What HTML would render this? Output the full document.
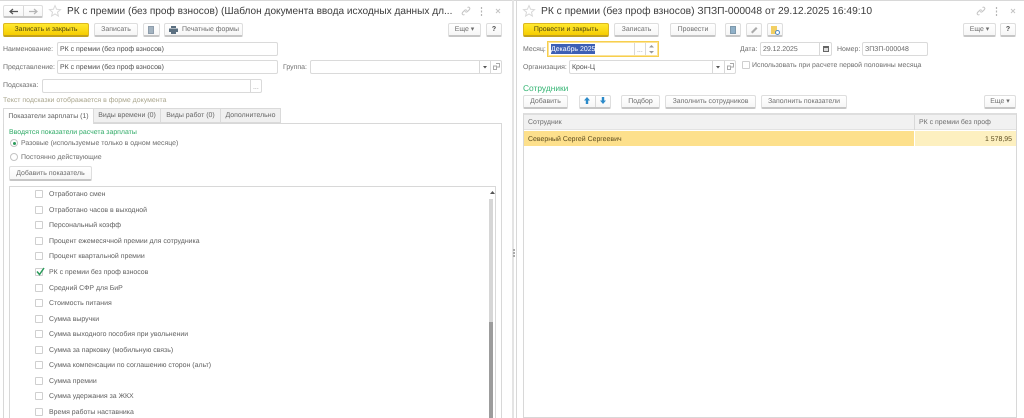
<!DOCTYPE html>
<html lang="ru"><head><meta charset="utf-8">
<style>
html,body{margin:0;padding:0;background:#fff}
#p{position:relative;width:1024px;height:418px;overflow:hidden;background:#fff;font:6.95px/12px "Liberation Sans",sans-serif;color:#666;text-rendering:geometricPrecision;filter:blur(.3px)}
#p div{position:absolute;box-sizing:border-box;white-space:nowrap}
#p svg{position:absolute;overflow:visible}
.t,.d,.l{transform:translateY(.8px)}
.t{color:#6e6e6e;height:12px}
.d{color:#4f4f4f;height:12px}
.f{background:#fff;border:1px solid #dadada;border-radius:2px}
.f.d{transform:none;line-height:13.5px!important}
.b{background:linear-gradient(#fff,#f6f6f6);border:1px solid #dedede;border-bottom:2px solid #c6c6c6;border-radius:2px;text-align:center;color:#6e6e6e;line-height:12.5px}
.y{background:linear-gradient(#ffe930,#f6cd00);border:1px solid #dcb820;border-bottom:2px solid #c4a21a;border-radius:2px;text-align:center;color:#4f4410;line-height:12.5px}
.c{width:8px;height:8px;border:1px solid #cfcfcf;border-radius:1px;background:#fff;left:35px}
.l{left:49px;color:#606060;height:12px}
.h{font-size:10.1px;line-height:14px;color:#3c3c3c;height:14px}
.ln{background:#d8d8d8}
</style></head><body><div id="p">
<div class="ln" style="left:0;top:0;width:1024px;height:1px"></div>

<!-- Left window -->
<div class="b" style="left:3px;top:5px;width:40px;height:13px"></div>
<div class="ln" style="left:23px;top:6px;width:1px;height:10px"></div>
<svg style="left:9px;top:8px" width="10" height="7"><path d="M1 3.5H9M4 1L1 3.5L4 6" stroke="#555" stroke-width="1.2" fill="none"/></svg>
<svg style="left:28px;top:8px" width="10" height="7"><path d="M1 3.5H9M6 1L9 3.5L6 6" stroke="#b5b5b5" stroke-width="1.2" fill="none"/></svg>
<svg style="left:49px;top:5px" width="12" height="12"><path d="M6 .6L7.6 4.3L11.5 4.6L8.5 7.2L9.4 11.1L6 9L2.6 11.1L3.5 7.2L.5 4.6L4.4 4.3Z" fill="#fff" stroke="#d8d8d8"/></svg>
<div class="h" style="left:67px;top:5px">РК с премии (без проф взносов) (Шаблон документа ввода исходных данных дл...</div>
<svg style="left:461px;top:6px" width="10" height="10"><path d="M1.5 6.5L3.5 4.5M6.5 1.5C8 .5 9.5 2 8.5 3.5L6.5 5.5C5.5 6.5 4.3 6 4 5.3M3.5 8.5C2 9.5.5 8 1.5 6.5L3.5 4.5C4.5 3.5 5.7 4 6 4.7" stroke="#c4c4c4" fill="none"/></svg>
<svg style="left:480px;top:7px" width="3" height="9"><path d="M1.5 0V2M1.5 3.5V5.5M1.5 7V9" stroke="#b5b5b5" stroke-width="1.2"/></svg>
<svg style="left:495px;top:8px" width="6" height="6"><path d="M1 1L5 5M5 1L1 5" stroke="#c4c4c4"/></svg>

<div class="y" style="left:3px;top:23px;width:86px;height:14px">Записать и закрыть</div>
<div class="b" style="left:94px;top:23px;width:44px;height:14px">Записать</div>
<div class="b" style="left:143px;top:23px;width:17px;height:14px"></div>
<div style="left:148px;top:26px;width:6px;height:8px;background:#a3b3c0;border:1px solid #8d9cab"></div>
<div class="b" style="left:164px;top:23px;width:79px;height:14px;padding-left:14px">Печатные формы</div>
<svg style="left:169px;top:26px" width="9" height="8"><path d="M2 0H7V2H2ZM0 2.5H9V6H7V8H2V6H0Z" fill="#5b6f80"/></svg>
<div class="b" style="left:448px;top:23px;width:33px;height:14px">Еще ▾</div>
<div class="b" style="left:486px;top:23px;width:16px;height:14px;color:#444;font-weight:bold">?</div>

<div class="t" style="left:3px;top:43px">Наименование:</div>
<div class="f d" style="left:57px;top:42px;width:221px;height:14px;padding:0 2px">РК с премии (без проф взносов)</div>
<div class="t" style="left:3px;top:61px">Представление:</div>
<div class="f d" style="left:57px;top:60px;width:221px;height:14px;padding:0 2px">РК с премии (без проф взносов)</div>
<div class="t" style="left:283px;top:61px">Группа:</div>
<div class="f" style="left:310px;top:60px;width:192px;height:14px"></div>
<div class="ln" style="left:479px;top:61px;width:1px;height:12px"></div>
<div class="ln" style="left:490px;top:61px;width:1px;height:12px"></div>
<svg style="left:483px;top:66px" width="4" height="3"><path d="M0 0H4L2 2.5Z" fill="#555"/></svg>
<svg style="left:493px;top:63px" width="7" height="7"><path d="M.5 3H3.5V6.5H.5ZM3 .5H6.5V4H3.5" stroke="#aaa" fill="none"/></svg>
<div class="t" style="left:3px;top:79px">Подсказка:</div>
<div class="f" style="left:42px;top:79px;width:220px;height:14px"></div>
<div class="ln" style="left:250px;top:80px;width:1px;height:12px"></div>
<div class="t" style="left:253px;top:81px;color:#999">...</div>
<div class="t" style="left:3px;top:94px;color:#aaa68e">Текст подсказки отображается в форме документа</div>

<!-- Tabs -->
<div style="left:93px;top:108px;width:68px;height:15px;background:#f0f0f0;border:1px solid #dadada;text-align:center;line-height:14.5px">Виды времени (0)</div>
<div style="left:161px;top:108px;width:60px;height:15px;background:#f0f0f0;border:1px solid #dadada;border-left:0;text-align:center;line-height:14.5px">Виды работ (0)</div>
<div style="left:220px;top:108px;width:61px;height:15px;background:#f0f0f0;border:1px solid #dadada;text-align:center;line-height:14.5px">Дополнительно</div>
<div class="ln" style="left:3px;top:123px;width:499px;height:1px"></div>
<div class="ln" style="left:3px;top:123px;width:1px;height:295px"></div>
<div class="ln" style="left:501px;top:123px;width:1px;height:295px"></div>
<div style="left:3px;top:108px;width:91px;height:16px;background:#fff;border:1px solid #dadada;border-bottom:0;text-align:center;line-height:15.5px;color:#606060">Показатели зарплаты (1)</div>

<div class="t" style="left:9px;top:126px;color:#2eaa66">Вводятся показатели расчета зарплаты</div>
<div style="left:10px;top:139px;width:8px;height:8px;border:1px solid #c4c4c4;border-radius:50%"></div>
<div style="left:13px;top:142px;width:3px;height:3px;background:#2a9a5a;border-radius:50%"></div>
<div class="t" style="left:21px;top:137px">Разовые (используемые только в одном месяце)</div>
<div style="left:10px;top:153px;width:8px;height:8px;border:1px solid #c4c4c4;border-radius:50%"></div>
<div class="t" style="left:21px;top:151px">Постоянно действующие</div>
<div class="b" style="left:9px;top:166px;width:83px;height:15px;line-height:13.5px">Добавить показатель</div>

<!-- List -->
<div class="ln" style="left:9px;top:186px;width:487px;height:1px"></div>
<div class="ln" style="left:9px;top:186px;width:1px;height:232px"></div>
<div class="ln" style="left:495px;top:186px;width:1px;height:232px"></div>
<svg style="left:490px;top:191px" width="5" height="3"><path d="M0 3H5L2.5 0Z" fill="#555"/></svg>
<div style="left:489px;top:199px;width:4px;height:123px;background:#d6d6d6"></div>
<div style="left:489px;top:322px;width:4px;height:96px;background:#9c9c9c"></div>

<div class="c" style="top:190px"></div><div class="l" style="top:188px">Отработано смен</div>
<div class="c" style="top:206px"></div><div class="l" style="top:204px">Отработано часов в выходной</div>
<div class="c" style="top:221px"></div><div class="l" style="top:219px">Персональный коэфф</div>
<div class="c" style="top:237px"></div><div class="l" style="top:235px">Процент ежемесячной премии для сотрудника</div>
<div class="c" style="top:252px"></div><div class="l" style="top:250px">Процент квартальной премии</div>
<div class="c" style="top:268px"></div><div class="l" style="top:266px">РК с премии без проф взносов</div>
<svg style="left:36px;top:267px" width="9" height="9"><path d="M1 4.5L3.5 7.5L8 1" stroke="#2a9a5a" stroke-width="1.5" fill="none"/></svg>
<div class="c" style="top:284px"></div><div class="l" style="top:282px">Средний СФР для БиР</div>
<div class="c" style="top:299px"></div><div class="l" style="top:297px">Стоимость питания</div>
<div class="c" style="top:315px"></div><div class="l" style="top:313px">Сумма выручки</div>
<div class="c" style="top:330px"></div><div class="l" style="top:328px">Сумма выходного пособия при увольнении</div>
<div class="c" style="top:346px"></div><div class="l" style="top:344px">Сумма за парковку (мобильную связь)</div>
<div class="c" style="top:361px"></div><div class="l" style="top:359px">Сумма компенсации по соглашению сторон (альт)</div>
<div class="c" style="top:377px"></div><div class="l" style="top:375px">Сумма премии</div>
<div class="c" style="top:392px"></div><div class="l" style="top:390px">Сумма удержания за ЖКХ</div>
<div class="c" style="top:408px"></div><div class="l" style="top:406px">Время работы наставника</div>

<!-- Splitter -->
<div style="left:512px;top:0;width:2px;height:418px;background:#e4e4e4"></div>
<div style="left:513px;top:249px;width:2px;height:2px;background:#aaa"></div>
<div style="left:513px;top:252px;width:2px;height:2px;background:#aaa"></div>
<div style="left:513px;top:255px;width:2px;height:2px;background:#aaa"></div>
<div class="ln" style="left:516px;top:0;width:1px;height:418px"></div>

<!-- Right window -->
<svg style="left:523px;top:5px" width="12" height="12"><path d="M6 .6L7.6 4.3L11.5 4.6L8.5 7.2L9.4 11.1L6 9L2.6 11.1L3.5 7.2L.5 4.6L4.4 4.3Z" fill="#fff" stroke="#d8d8d8"/></svg>
<div class="h" style="left:541px;top:5px;font-size:10.26px">РК с премии (без проф взносов) ЗПЗП-000048 от 29.12.2025 16:49:10</div>
<svg style="left:976px;top:6px" width="10" height="10"><path d="M1.5 6.5L3.5 4.5M6.5 1.5C8 .5 9.5 2 8.5 3.5L6.5 5.5C5.5 6.5 4.3 6 4 5.3M3.5 8.5C2 9.5.5 8 1.5 6.5L3.5 4.5C4.5 3.5 5.7 4 6 4.7" stroke="#c4c4c4" fill="none"/></svg>
<svg style="left:995px;top:7px" width="3" height="9"><path d="M1.5 0V2M1.5 3.5V5.5M1.5 7V9" stroke="#b5b5b5" stroke-width="1.2"/></svg>
<svg style="left:1010px;top:8px" width="6" height="6"><path d="M1 1L5 5M5 1L1 5" stroke="#c4c4c4"/></svg>

<div class="y" style="left:523px;top:23px;width:86px;height:14px">Провести и закрыть</div>
<div class="b" style="left:614px;top:23px;width:45px;height:14px">Записать</div>
<div class="b" style="left:670px;top:23px;width:46px;height:14px">Провести</div>
<div class="b" style="left:725px;top:23px;width:16px;height:14px"></div>
<div style="left:730px;top:26px;width:6px;height:8px;background:#8fb0c8;border:1px solid #7d98ab"></div>
<div class="b" style="left:746px;top:23px;width:16px;height:14px"></div>
<svg style="left:750px;top:26px" width="8" height="8"><path d="M1 6L6 1L7.5 2.5L2.5 7.5Z" fill="#aaa"/></svg>
<div class="b" style="left:767px;top:23px;width:16px;height:14px"></div>
<div style="left:771px;top:26px;width:6px;height:8px;background:#f2cf63"></div>
<div style="left:775px;top:30px;width:5px;height:5px;background:#fff;border:1px solid #4c88c4;border-radius:50%"></div>
<div class="b" style="left:963px;top:23px;width:33px;height:14px">Еще ▾</div>
<div class="b" style="left:1000px;top:23px;width:16px;height:14px;color:#444;font-weight:bold">?</div>

<div class="t" style="left:523px;top:43px">Месяц:</div>
<div style="left:547px;top:41px;width:112px;height:16px;background:#fff;border:1px solid #f7cf4e;box-shadow:inset 0 0 0 1px #fbe39a"></div>
<div style="left:551px;top:44px;width:44px;height:10px;background:#3d5fb5;color:#fff;line-height:11.5px">Декабрь 2025</div>
<div class="ln" style="left:634px;top:43px;width:1px;height:12px"></div>
<div class="ln" style="left:645px;top:43px;width:1px;height:12px"></div>
<div class="t" style="left:637px;top:44px;color:#999">...</div>
<svg style="left:649px;top:45px" width="5" height="9"><path d="M0 2.5H5L2.5 0ZM0 6H5L2.5 8.5Z" fill="#999"/></svg>
<div class="t" style="left:740px;top:43px">Дата:</div>
<div class="f d" style="left:760px;top:42px;width:72px;height:14px;padding:0 2px;color:#666">29.12.2025</div>
<div class="ln" style="left:819px;top:43px;width:1px;height:12px"></div>
<svg style="left:823px;top:46px" width="6" height="6"><path d="M0 0H6V6H0Z" fill="#666"/><path d="M1 2H5V5H1Z" fill="#ddd"/></svg>
<div class="t" style="left:837px;top:43px">Номер:</div>
<div class="f d" style="left:862px;top:42px;width:66px;height:14px;padding:0 2px;color:#666">ЗПЗП-000048</div>

<div class="t" style="left:523px;top:61px">Организация:</div>
<div class="f d" style="left:569px;top:60px;width:167px;height:14px;padding:0 2px">Крон-Ц</div>
<div class="ln" style="left:712px;top:61px;width:1px;height:12px"></div>
<div class="ln" style="left:724px;top:61px;width:1px;height:12px"></div>
<svg style="left:716px;top:66px" width="4" height="3"><path d="M0 0H4L2 2.5Z" fill="#555"/></svg>
<svg style="left:727px;top:63px" width="7" height="7"><path d="M.5 3H3.5V6.5H.5ZM3 .5H6.5V4H3.5" stroke="#aaa" fill="none"/></svg>
<div class="c" style="left:742px;top:61px"></div>
<div class="t" style="left:752px;top:59px">Использовать при расчете первой половины месяца</div>

<div style="left:523px;top:82px;color:#35b574;font-size:8.4px;line-height:12px">Сотрудники</div>
<div class="b" style="left:523px;top:95px;width:45px;height:14px">Добавить</div>
<div class="b" style="left:579px;top:95px;width:32px;height:14px"></div>
<div class="ln" style="left:595px;top:96px;width:1px;height:11px"></div>
<svg style="left:584px;top:97px" width="6" height="7"><path d="M3 0L6 3.5H4.2V7H1.8V3.5H0Z" fill="#2b8ac9"/></svg>
<svg style="left:600px;top:97px" width="6" height="7"><path d="M3 7L6 3.5H4.2V0H1.8V3.5H0Z" fill="#2b8ac9"/></svg>
<div class="b" style="left:621px;top:95px;width:39px;height:14px">Подбор</div>
<div class="b" style="left:665px;top:95px;width:91px;height:14px">Заполнить сотрудников</div>
<div class="b" style="left:761px;top:95px;width:86px;height:14px">Заполнить показатели</div>
<div class="b" style="left:984px;top:95px;width:32px;height:14px">Еще ▾</div>

<div style="left:523px;top:113px;width:494px;height:305px;border:1px solid #d8d8d8;border-top:2px solid #dedede;background:#fff"></div>
<div style="left:524px;top:115px;width:492px;height:15px;background:#f1f1f1;border-bottom:1px solid #e2e2e2"></div>
<div class="ln" style="left:914px;top:115px;width:1px;height:15px"></div>
<div class="t" style="left:528px;top:116px">Сотрудник</div>
<div class="t" style="left:919px;top:116px">РК с премии без проф</div>
<div style="left:524px;top:131px;width:390px;height:15px;background:#fde08c"></div>
<div style="left:915px;top:131px;width:101px;height:15px;background:#fdf0c0"></div>
<div class="d" style="left:528px;top:133px;color:#5a4a1e">Северный Сергей Сергеевич</div>
<div class="d" style="right:12px;top:133px;color:#5a4a1e">1 578,95</div>
</div></body></html>
